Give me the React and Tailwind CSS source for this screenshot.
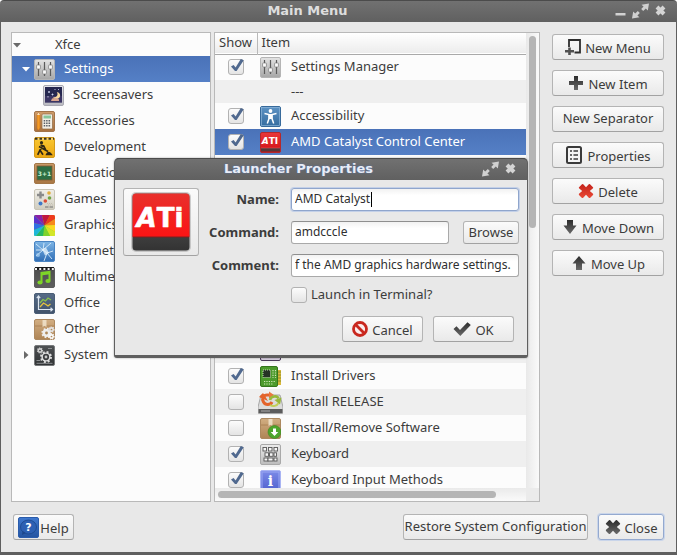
import React from "react";

const buttonLook =
  "rounded-[3px] border border-[#b4b4b4] border-b-[#a2a2a2] bg-linear-to-b from-[#fbfbfb] to-[#e9e9e9] text-[#3c3c3c]";

/* ---------- small glyphs ---------- */

function Svg({ size = "size-[21px]", box = "0 0 21 21", children }) {
  return (
    <svg viewBox={box} className={`block shrink-0 ${size}`} aria-hidden="true">
      {children}
    </svg>
  );
}

function Gradient({ id, from, to }) {
  return (
    <linearGradient id={id} x1="0" y1="0" x2="0" y2="1">
      <stop offset="0" stopColor={from} />
      <stop offset="1" stopColor={to} />
    </linearGradient>
  );
}

function Tile({ id, from, to, edge }) {
  return (
    <>
      <defs>
        <Gradient id={id} from={from} to={to} />
      </defs>
      <rect x="0.5" y="0.5" width="20" height="20" rx="1.5" fill={`url(#${id})`} stroke={edge} />
    </>
  );
}

function Gear({ cx, cy, r, fill, hole, ring = 0.36 }) {
  const tooth = (2 * Math.PI * r) / 16;
  return (
    <>
      <circle cx={cx} cy={cy} r={r} fill={fill} />
      <circle cx={cx} cy={cy} r={r} fill="none" stroke={fill} strokeWidth={r * 0.6} strokeDasharray={tooth} />
      <circle cx={cx} cy={cy} r={r * ring} fill={hole} />
    </>
  );
}

function SlidersIcon() {
  return (
    <Svg>
      <Tile id="sliders" from="#e4e4e4" to="#a6a6a6" edge="#b5b5b5" />
      <path d="M4.500 3v14M10.500 3v14M16.500 3v14" stroke="#5b5b5b" strokeWidth="1.200" />
      <g fill="#fafafa" stroke="#777" strokeWidth="0.700">
        <rect x="2.600" y="6" width="3.800" height="4" rx="0.600" />
        <rect x="8.600" y="11" width="3.800" height="4" rx="0.600" />
        <rect x="14.600" y="6" width="3.800" height="4" rx="0.600" />
      </g>
    </Svg>
  );
}

function ScreensaverIcon() {
  return (
    <Svg>
      <Tile id="saver" from="#e6e6ea" to="#b9b9c0" edge="#a9a9b2" />
      <rect x="2" y="2" width="17" height="15.500" fill="#25274f" />
      <path d="M2 11h17v6.500H2z" fill="#4b3f72" opacity=".6" />
      <path d="M13.800 7c2 3-.4 5.600-3.700 5.300 1.300 2.300 6 2.700 7-1 .5-1.900-1-4-3.300-4.300z" fill="#f8d9a0" />
      <path d="M9 13.500c2-1 5-.6 7 .9v1.600H8z" fill="#d9a58f" />
      <path d="M6 6v2M5 7h2M9.500 8.500v2M8.500 9.500h2M5 11v1.500M12 4v1M15 4.500h1" stroke="#d8ddf5" strokeWidth=".8" />
    </Svg>
  );
}

function AccessoriesIcon() {
  return (
    <Svg>
      <Tile id="acc" from="#cf9d6b" to="#a9713f" edge="#a2744a" />
      <path d="M3 4l1.500-2.500L6 4v13l-1 2H3.500L3 17z" fill="#f39a26" stroke="#b8641a" strokeWidth=".5" />
      <path d="M3 4l1.500-2.500L6 4z" fill="#fbe3c0" />
      <rect x="8" y="3" width="10.500" height="15" rx="1" fill="#f3efe6" stroke="#8e6a45" strokeWidth=".7" />
      <rect x="9.500" y="4.500" width="7.500" height="3" fill="#86c79b" />
      <path d="M9.700 9.700h7.300M9.700 12.200h7.300M9.700 14.700h7.300" stroke="#5c6068" strokeWidth="1.500" strokeDasharray="1.500 .9" />
    </Svg>
  );
}

function DevelopmentIcon() {
  return (
    <Svg>
      <Tile id="dev" from="#f9c832" to="#eda711" edge="#d29a1a" />
      <path d="M1 1h19v2H1z" fill="#f4d36b" />
      <path d="M1 1.800h19" stroke="#3a3120" strokeWidth="2" strokeDasharray="2.500 2" />
      <circle cx="7.500" cy="5.700" r="1.600" fill="#2e2716" />
      <path d="M6.500 8l3.200 1 1.800 3.600M8.500 9l-2.500 4.200 3 4.500M6 13l-2.300 4.800M5 9.500l9 5" stroke="#2e2716" strokeWidth="1.700" fill="none" />
      <path d="M11.500 18.300c1-3.300 3-4.300 4.700-3 1.200 1 2 2 2.500 3z" fill="#2e2716" />
    </Svg>
  );
}

function EducationIcon() {
  return (
    <Svg>
      <Tile id="edu" from="#c99a68" to="#a97744" edge="#a37748" />
      <rect x="3" y="3" width="15" height="14" fill="#2d6e43" stroke="#7e5a33" strokeWidth=".8" />
      <text x="10.500" y="12.500" textAnchor="middle" fontFamily="DejaVu Sans" fontWeight="bold" fontSize="6" fill="#c9efcf">
        3+1
      </text>
    </Svg>
  );
}

function GamesIcon() {
  return (
    <Svg>
      <Tile id="games" from="#f1efe8" to="#cfccbf" edge="#c8c4b6" />
      <path d="M6.500 2.500v7M3 6h7" stroke="#8a8a8a" strokeWidth="2.400" />
      <circle cx="15" cy="4" r="1.800" fill="#e2ad3d" />
      <circle cx="15.500" cy="9" r="1.800" fill="#70a544" />
      <circle cx="11.300" cy="12" r="1.800" fill="#dc4b35" />
      <circle cx="6.500" cy="14.500" r="2" fill="#3f78c8" />
      <path d="M11 18h3.500M15.500 18H19" stroke="#707070" strokeWidth="1.200" />
      <path d="M13 14.500h6M14 16h5" stroke="#b7b3a6" strokeWidth=".7" strokeDasharray="1 1" />
    </Svg>
  );
}

function GraphicsIcon() {
  return (
    <Svg>
      <defs>
        <clipPath id="wheelclip">
          <rect x="0" y="0" width="21" height="21" rx="1.500" />
        </clipPath>
      </defs>
      <g clipPath="url(#wheelclip)">
        <rect width="21" height="21" fill="#7ed32d" />
        <path d="M10.500 10.500L0 0h8z" fill="#8a1fa8" />
        <path d="M10.500 10.500L8 0h8z" fill="#c1173f" />
        <path d="M10.500 10.500L16 0h5v4z" fill="#ee3a1d" />
        <path d="M10.500 10.500L21 4v6z" fill="#f7891c" />
        <path d="M10.500 10.500L21 10v7z" fill="#fcd922" />
        <path d="M10.500 10.500L21 17v4h-5z" fill="#d3e629" />
        <path d="M10.500 10.500L16 21H9z" fill="#7ed32d" />
        <path d="M10.500 10.500L9 21H2z" fill="#25b865" />
        <path d="M10.500 10.500L2 21H0v-6z" fill="#1fb7d8" />
        <path d="M10.500 10.500L0 15V8z" fill="#2f6fe4" />
        <path d="M10.500 10.500L0 8V0z" fill="#5a32cf" />
      </g>
    </Svg>
  );
}

function InternetIcon() {
  return (
    <Svg>
      <Tile id="net" from="#7fb6e6" to="#2f6db5" edge="#4a84c2" />
      <path d="M2 3l7 6 8-7M9 9l-7 6M9 9l4 3 6-2M13 12l-3 8M13 12l5 6M2 9l7 0M9 9l1-7" stroke="#d9ecfb" strokeWidth="1" fill="none" opacity=".9" />
      <path d="M8 8l4-1.500L15 12l-4 2.500z" fill="#eaf5fd" opacity=".75" />
      <circle cx="4" cy="14" r="2" fill="#a9d1f2" opacity=".7" />
    </Svg>
  );
}

function MultimediaIcon() {
  return (
    <Svg>
      <Tile id="media" from="#4c4c4c" to="#5e5e5e" edge="#5b5b5b" />
      <path d="M1 0h19v3H1z" fill="#1a1a1a" />
      <path d="M1 2h19" stroke="#f3f3f3" strokeWidth="2" strokeDasharray="2 2.200" />
      <path d="M7.500 15V6l8-1v8.500" stroke="#7ed528" strokeWidth="2" fill="none" />
      <path d="M7 7.500l8.500-1.200" stroke="#7ed528" strokeWidth="2" />
      <ellipse cx="6" cy="15.500" rx="2.600" ry="2.100" fill="#7ed528" />
      <ellipse cx="14" cy="14" rx="2.600" ry="2.100" fill="#7ed528" />
    </Svg>
  );
}

function OfficeIcon() {
  return (
    <Svg>
      <Tile id="office" from="#566b86" to="#41536b" edge="#4a5d76" />
      <path d="M4.500 3.500v13H18M2.800 5.200L4.500 3l1.700 2.200M16.500 14.700l2 1.800-2 1.700" stroke="#dde6f0" strokeWidth="1.200" fill="none" />
      <path d="M6 10l3-3.500 2.500 1.500 2.500-3 3 2" stroke="#8ac24a" strokeWidth="1.300" fill="none" />
      <path d="M6 14l3.500-4 2.500 1.500 2 1.500 2.500-2" stroke="#e5c33c" strokeWidth="1.300" fill="none" />
    </Svg>
  );
}

function Carton({ id }) {
  return (
    <>
      <Tile id={id} from="#d2ae82" to="#ae8455" edge="#ad8960" />
      <path d="M1 7h19" stroke="#a67b4e" strokeWidth=".8" />
      <path d="M8.500 1h4v7l-2-1-2 1z" fill="#f1e4cd" opacity=".85" />
    </>
  );
}

function OtherIcon() {
  return (
    <Svg>
      <Carton id="other" />
      <Gear cx={12.5} cy={14} r={4} fill="#efefef" hole="#b08a5c" />
      <Gear cx={17.5} cy={10.5} r={2.4} fill="#e4e4e4" hole="#b08a5c" />
      <Gear cx={17.5} cy={17.5} r={2.4} fill="#fafafa" hole="#b08a5c" />
    </Svg>
  );
}

function SystemIcon() {
  return (
    <Svg>
      <Tile id="system" from="#4f5254" to="#303234" edge="#77797b" />
      <path d="M2.500 15.500h4M14 3.500h4M2.500 18.300h16" stroke="#8d8f91" strokeWidth="1" />
      <Gear cx={6} cy={5.5} r={2.4} fill="#cfcfcf" hole="#3b3d3f" />
      <Gear cx={12} cy={12} r={4.6} fill="#dedede" hole="#3b3d3f" ring={0.68} />
      <circle cx="12" cy="12" r="1.400" fill="#c9c9c9" />
    </Svg>
  );
}

function AccessibilityIcon() {
  return (
    <Svg>
      <Tile id="a11y" from="#5d93c4" to="#356c9f" edge="#376a9b" />
      <rect x="1.500" y="1.500" width="18" height="18" fill="none" stroke="#8db5d9" strokeWidth=".7" />
      <circle cx="10.500" cy="5" r="1.900" fill="#fff" />
      <path d="M4.500 7.600l4.500 1v4l-1.700 5M16.500 7.600l-4.500 1v4l1.700 5" stroke="#fff" strokeWidth="1.500" fill="none" />
      <path d="M8.500 8h4v5h-4z" fill="#fff" />
    </Svg>
  );
}

function AtiIcon() {
  return (
    <Svg>
      <Tile id="atis" from="#e8383a" to="#d20f14" edge="#b5282b" />
      <path d="M1 16h19v3.500H1z" fill="#55383a" />
      <path d="M1 16h19" stroke="#e46a6a" strokeWidth=".5" />
      <text x="10" y="12.200" textAnchor="middle" fontFamily="DejaVu Sans" fontWeight="bold" fontSize="9" fill="#fff">
        <tspan fontStyle="italic">A</tspan>TI
      </text>
    </Svg>
  );
}

function AtiLogo() {
  return (
    <Svg size="size-[60px]" box="0 0 60 60">
      <defs>
        <Gradient id="atired" from="#e8302c" to="#fb1414" />
        <Gradient id="atidark" from="#5f5f5f" to="#333333" />
      </defs>
      <rect x="0" y="0" width="60" height="60" rx="5" fill="#9a9a9a" opacity=".45" />
      <rect x="1.500" y="1.500" width="57" height="57" rx="3.500" fill="url(#atidark)" />
      <path d="M5 1.500h50a3.500 3.500 0 0 1 3.500 3.500v40h-57V5A3.500 3.500 0 0 1 5 1.500z" fill="url(#atired)" />
      <path d="M2 45h56" stroke="#7a2020" strokeWidth="1" />
      <text
        x="29"
        y="34.500"
        textAnchor="middle"
        fill="#fff"
        stroke="#fff"
        strokeWidth=".6"
        strokeLinejoin="round"
        fontFamily="DejaVu Sans"
        fontWeight="bold"
        fontSize="26"
      >
        <tspan fontStyle="italic">A</tspan>Ti
      </text>
    </Svg>
  );
}

function DriversIcon() {
  return (
    <Svg>
      <rect x="15" y="4" width="6" height="15" fill="#d9b83a" />
      <path d="M15 6h6M15 9h6M15 12h6M15 15h6" stroke="#7f8a2a" strokeWidth=".9" />
      <rect x=".5" y=".5" width="17" height="20" rx="1.500" fill="#4c9a2c" stroke="#35761d" />
      <rect x="3" y="4" width="7.500" height="7.500" fill="#263326" stroke="#c5dcb4" strokeWidth="1" strokeDasharray="1 1" />
      <path d="M4 15.500h12M4 18h9M13 4v8M15.500 4v8" stroke="#cfe8b8" strokeWidth="1.200" strokeDasharray="1.200 1.200" />
    </Svg>
  );
}

function ReleaseIcon() {
  return (
    <Svg size="h-[23px] w-[25px]" box="0 0 25 23">
      <path d="M3 4h19l3 12v5.500a1 1 0 0 1-1 1H1a1 1 0 0 1-1-1V16z" fill="#dcdcdc" stroke="#8b8b8b" strokeWidth=".7" />
      <path d="M.5 18h24v4H.5z" fill="#5c5c5c" />
      <path d="M3 20h9" stroke="#a9a9a9" strokeWidth="1" />
      <path d="M14 11c-1.500 3-6.500 3.500-8.500 0S5.500 4 9 4h3" stroke="#e4632b" strokeWidth="3" fill="none" />
      <path d="M1 6l4-4 2 3 3 5z" fill="#e4632b" />
      <path d="M11 .5l5 3.500-5 3.500z" fill="#e9773f" />
      <path d="M12 9c1-4 7-5 8.500-1.500" stroke="#98b83a" strokeWidth="2.600" fill="none" />
      <path d="M16.500 9l7-2.500-1.500 7z" fill="#98b83a" />
      <path d="M12 14c3 2 7 1 8.500-2" stroke="#c2cf5a" strokeWidth="2" fill="none" />
    </Svg>
  );
}

function SoftwareIcon() {
  return (
    <Svg>
      <Carton id="software" />
      <circle cx="14.500" cy="14" r="6.500" fill="#4ea52c" stroke="#3b861e" strokeWidth=".6" />
      <path d="M13 10.500h3V14h2.300l-3.800 4-3.800-4H13z" fill="#fff" />
    </Svg>
  );
}

function KeyboardIcon() {
  return (
    <Svg>
      <Tile id="keyb" from="#ececec" to="#bcbcbc" edge="#a9a9a9" />
      <g fill="#f7f7f7" stroke="#555" strokeWidth=".9">
        <rect x="3" y="3.500" width="3.500" height="3.500" />
        <rect x="8.500" y="3.500" width="3.500" height="3.500" />
        <rect x="14" y="3.500" width="3.500" height="3.500" />
        <rect x="5" y="8.800" width="3.500" height="3.500" />
        <rect x="9.500" y="8.800" width="3.500" height="3.500" />
        <rect x="14" y="8.800" width="2.500" height="3.500" />
        <rect x="4" y="14" width="4" height="3" />
        <rect x="8" y="14" width="5" height="3" />
        <rect x="14" y="14" width="3" height="3" />
      </g>
    </Svg>
  );
}

function InputMethodIcon() {
  return (
    <Svg>
      <Tile id="ibus" from="#7c8be8" to="#5263cf" edge="#a9b4f3" />
      <rect x="2" y="2" width="17" height="17" fill="none" stroke="#9aa7f2" strokeWidth="1" />
      <text x="10.500" y="16" textAnchor="middle" fontFamily="DejaVu Serif" fontWeight="bold" fontSize="14" fill="#fff">
        i
      </text>
    </Svg>
  );
}

function PurpleIcon() {
  return (
    <Svg>
      <Tile id="purple" from="#8b7b9b" to="#d8cfe0" edge="#4d3b5c" />
    </Svg>
  );
}

function HelpIcon() {
  return (
    <Svg>
      <Tile id="help" from="#3f78cf" to="#2454a0" edge="#2a5cac" />
      <ellipse cx="10.500" cy="10" rx="8" ry="7" fill="#2d60b3" stroke="#1c478c" strokeWidth=".8" />
      <path d="M4.500 14L4 18l4-2z" fill="#1c478c" />
      <text x="10.500" y="14" textAnchor="middle" fontFamily="DejaVu Sans" fontWeight="bold" fontSize="11" fill="#fff">
        ?
      </text>
    </Svg>
  );
}

function DarkDefs({ id }) {
  return (
    <defs>
      <Gradient id={id} from="#2c2c2c" to="#6a6a6a" />
    </defs>
  );
}

function NewMenuGlyph() {
  return (
    <Svg size="size-4" box="0 0 16 16">
      <path d="M4 8V1h11v12.500H9.500" fill="none" stroke="#2e2e2e" strokeWidth="1.800" />
      <path d="M3.200 8.500h2.600V11H9v2.600H5.800V16H3.200v-2.400H0V11h3.200z" fill="#505050" />
    </Svg>
  );
}

function PlusGlyph() {
  return (
    <Svg size="size-4" box="0 0 16 16">
      <DarkDefs id="plus" />
      <path d="M6 1h4v5h5v4h-5v5H6v-5H1V6h5z" fill="url(#plus)" />
    </Svg>
  );
}

function PropertiesGlyph() {
  return (
    <Svg size="size-[18px]" box="0 0 18 18">
      <rect x="2" y="1" width="14" height="16" rx="1.500" fill="#f4f4f4" stroke="#3a3a3a" strokeWidth="2" />
      <path d="M5 5h2M5 9h2M5 13h2M8.500 5H13M8.500 9H13M8.500 13H13" stroke="#3a3a3a" strokeWidth="1.700" />
    </Svg>
  );
}

function CrossGlyph({ id, from, to }) {
  return (
    <Svg size="size-4" box="0 0 16 16">
      <defs>
        <Gradient id={id} from={from} to={to} />
      </defs>
      <path
        d="M1 4.200L4 1.200q.6-.4 1.200.1L8 4.300l2.800-3q.6-.5 1.200-.1l3 3q.4.600 0 1L11.800 8l3.200 2.800q.5.500 0 1.100l-3 3q-.6.300-1.200-.1L8 11.700l-2.800 3.100q-.6.500-1.200.1l-3-3q-.4-.6 0-1.100L4.200 8 1 5.200q-.4-.4 0-1z"
        fill={`url(#${id})`}
      />
    </Svg>
  );
}

function ArrowGlyph({ id, up }) {
  return (
    <Svg size="size-4" box="0 0 16 16">
      <DarkDefs id={id} />
      <path d={up ? "M8 1l6.500 7.500H11V15H5V8.500H1.500z" : "M5 1h6v5.500h3.500L8 15 1.500 6.500H5z"} fill={`url(#${id})`} />
    </Svg>
  );
}

function ForbidGlyph() {
  return (
    <Svg size="size-4" box="0 0 16 16">
      <circle cx="8" cy="8" r="6.500" fill="#fbeeee" stroke="#c9281f" strokeWidth="2.800" />
      <path d="M3.500 3.500l9 9" stroke="#c9281f" strokeWidth="2.800" />
    </Svg>
  );
}

function TickGlyph() {
  return (
    <Svg size="h-4 w-[18px]" box="0 0 18 16">
      <DarkDefs id="tick" />
      <path d="M.5 8l3-2.800L7 9 14.500 1.200 17.800 4 7.300 15z" fill="url(#tick)" />
    </Svg>
  );
}

/* ---------- window chrome ---------- */

function MinimizeGlyph() {
  return (
    <Svg size="h-4 w-[11px]" box="0 0 11 16">
      <path d="M.5 10h10v2.500H.5z" fill="#d2d2d2" />
    </Svg>
  );
}

function MaximizeGlyph() {
  return (
    <Svg size="h-4 w-[17px]" box="0 0 17 16">
      <path
        d="M17 .5l-1.200 7-2-1.900-2.600 2.500-2-2.100 2.400-2.500L9.500 1.700zM0 15.500l1.200-7 2 1.900L5.800 7.900l2 2.100-2.400 2.500 2.100 1.800z"
        fill="#d0d0d0"
      />
    </Svg>
  );
}

function CloseGlyph() {
  return (
    <Svg size="h-4 w-[11px]" box="0 0 11 16">
      <path d="M2 4l7 7M9 4l-7 7" stroke="#d4d4d4" strokeWidth="4" />
    </Svg>
  );
}

function TitleBar({ title, minimize, focused }) {
  return (
    <header className="flex h-[22px] shrink-0 items-center rounded-t-[4px] border-t border-[#4b4b4b] bg-linear-to-b from-[#717171] to-[#606060] pr-[11px] pb-px font-['DejaVu_Sans'] text-[13px] leading-4 font-bold">
      <h2 className={`flex-1 text-center ${focused ? "text-[#e8ecf6] [text-shadow:0_0_2px_#5577b5]" : "text-[#dedede]"}`}>
        {title}
      </h2>
      <div className="flex items-center gap-1.5">
        {minimize && (
          <button type="button" aria-label="Minimize">
            <MinimizeGlyph />
          </button>
        )}
        <button type="button" aria-label="Maximize">
          <MaximizeGlyph />
        </button>
        <button type="button" aria-label="Close window">
          <CloseGlyph />
        </button>
      </div>
    </header>
  );
}

/* ---------- controls ---------- */

function ActionButton({ icon, children, className = "" }) {
  return (
    <button type="button" className={`flex h-[26px] items-center justify-center gap-1 whitespace-nowrap ${buttonLook} ${className}`}>
      {icon}
      <span className={icon ? "pt-0.5" : "pb-0.5"}>{children}</span>
    </button>
  );
}

function CheckBox({ id, checked, label }) {
  return (
    <span className="relative block size-4 shrink-0">
      <input
        id={id}
        type="checkbox"
        defaultChecked={checked}
        aria-label={label}
        className="peer block size-4 appearance-none rounded-[3px] border border-[#b2b2b2] bg-linear-to-b from-[#fcfcfc] to-[#e4e4e4]"
      />
      <svg viewBox="0 0 16 16" className="pointer-events-none absolute inset-0 hidden size-4 overflow-visible peer-checked:block" aria-hidden="true">
        <path d="M3 7.600L5.600 6l2 2.400L12.800 0l3 1.200L8.600 12H7z" fill="#50698f" />
      </svg>
    </span>
  );
}

function Expander({ open, light }) {
  return (
    <svg viewBox="0 0 8 8" className={`size-2 shrink-0 ${light ? "text-white" : "text-[#6a6a6a]"}`} aria-hidden="true">
      <path d={open ? "M0 2h8L4 6.500z" : "M2 0v8l4.500-4z"} fill="currentColor" />
    </svg>
  );
}

/* ---------- data ---------- */

const categories = [
  { name: "Accessories", Icon: AccessoriesIcon },
  { name: "Development", Icon: DevelopmentIcon },
  { name: "Education", Icon: EducationIcon },
  { name: "Games", Icon: GamesIcon },
  { name: "Graphics", Icon: GraphicsIcon },
  { name: "Internet", Icon: InternetIcon },
  { name: "Multimedia", Icon: MultimediaIcon },
  { name: "Office", Icon: OfficeIcon },
  { name: "Other", Icon: OtherIcon },
  { name: "System", Icon: SystemIcon, expandable: true },
];

const items = [
  { name: "Settings Manager", Icon: SlidersIcon, shown: true },
  { name: "---", separator: true },
  { name: "Accessibility", Icon: AccessibilityIcon, shown: true },
  { name: "AMD Catalyst Control Center", Icon: AtiIcon, shown: true, selected: true },
  {},
  {},
  {},
  {},
  {},
  {},
  {},
  { Icon: PurpleIcon },
  { name: "Install Drivers", Icon: DriversIcon, shown: true },
  { name: "Install RELEASE", Icon: ReleaseIcon, shown: false },
  { name: "Install/Remove Software", Icon: SoftwareIcon, shown: false },
  { name: "Keyboard", Icon: KeyboardIcon, shown: true },
  { name: "Keyboard Input Methods", Icon: InputMethodIcon, shown: true },
];

const selectedRow = "bg-linear-to-b from-[#4a72b8] to-[#5580c6] text-white";

function CategoryTree() {
  return (
    <nav aria-label="Menus" className="w-[200px] shrink-0 overflow-hidden border border-[#b9b9b9] bg-[#fcfcfc]">
      <ul>
        <li className="flex h-[23px] items-center gap-[34px] pl-px">
          <Expander open />
          <span className="pb-0.5">Xfce</span>
        </li>
        <li className={`flex h-[26px] items-center pl-2.5 ${selectedRow}`}>
          <Expander open light />
          <span className="flex items-center gap-[9px] pl-1">
            <SlidersIcon />
            <span className="pb-0.5">Settings</span>
          </span>
        </li>
        <li className="flex h-[26px] items-center gap-[9px] pl-[31px]">
          <ScreensaverIcon />
          <span className="pb-0.5">Screensavers</span>
        </li>
        {categories.map(({ name, Icon, expandable }) => (
          <li key={name} className="flex h-[26px] items-center pl-2.5">
            <span className="w-2">{expandable && <Expander />}</span>
            <span className="flex items-center gap-[9px] pl-1">
              <Icon />
              <span className="pb-0.5">{name}</span>
            </span>
          </li>
        ))}
      </ul>
    </nav>
  );
}

function ItemRow({ item, index }) {
  const { name, Icon, shown, separator, selected } = item;
  const stripe = index % 2 ? "bg-[#efefef]" : "bg-[#fcfcfc]";
  return (
    <tr className={`${separator ? "h-[23px]" : "h-[26px]"} ${selected ? selectedRow : stripe}`}>
      <td className="p-0 pl-[13px]">{shown !== undefined && <CheckBox checked={shown} label={`Show ${name}`} />}</td>
      <td className="p-0">
        <div className="flex items-center">
          <span className="flex w-[27px] shrink-0 justify-center">{Icon && <Icon />}</span>
          <span className="pb-0.5 pl-[7px] whitespace-nowrap">{name}</span>
        </div>
      </td>
    </tr>
  );
}

function ItemList() {
  return (
    <section aria-label="Items" className="flex min-w-0 flex-1 flex-col border border-[#b9b9b9] bg-[#fcfcfc]">
      <div className="flex min-h-0 flex-1">
        <div className="min-w-0 flex-1 overflow-hidden">
          <table className="w-full table-fixed border-collapse">
            <thead>
              <tr className="h-[21px] border-b border-[#a9a9a9] bg-linear-to-b from-white to-[#ececec] text-left">
                <th className="w-[42px] border-r border-[#b9b9b9] p-0 pb-0.5 pl-1 font-normal">Show</th>
                <th className="p-0 pb-0.5 pl-1 font-normal">Item</th>
              </tr>
            </thead>
            <tbody>
              {items.map((item, index) => (
                <ItemRow key={index} item={item} index={index} />
              ))}
            </tbody>
          </table>
        </div>
        <div className="w-[13px] shrink-0 bg-linear-to-r from-[#e9e9e9] to-[#fafafa] px-[3px] pt-[3px]">
          <div className="h-[192px] rounded-full bg-[#b5b5b5]" />
        </div>
      </div>
      <div className="flex h-[13px] shrink-0 bg-[#ebebeb]">
        <div className="flex-1 bg-linear-to-b from-[#eaeaea] to-[#fafafa] px-[3px] pt-[3px]">
          <div className="h-[7px] w-[91%] rounded-full bg-[#b5b5b5]" />
        </div>
        <div className="w-[13px]" />
      </div>
    </section>
  );
}

const fieldBase =
  "block h-[23px] w-full min-w-0 rounded-[3px] border bg-linear-to-b from-[#f2f2f2] to-white to-30% px-[3px] pb-0.5 text-xs text-[#2f2f2f] outline-none";
const fieldLook = `${fieldBase} border-[#a9a9a9] border-t-[#8f8f8f]`;
const focusedField = `${fieldBase} border-[#8fa5cc] shadow-[0_0_0_1px_#c3d0e8]`;

function FieldLabel({ htmlFor, children }) {
  return (
    <label htmlFor={htmlFor} className="pb-0.5 text-right font-bold">
      {children}
    </label>
  );
}

function LauncherDialog() {
  return (
    <section
      role="dialog"
      aria-label="Launcher Properties"
      className="absolute top-[158px] left-[114px] w-[414px] rounded-t-[5px] rounded-b-[3px] bg-[#5f5f5f] px-px pb-[3px] shadow-[0_0_2px_#0006]"
    >
      <TitleBar title="Launcher Properties" focused />
      <form className="bg-[#e8e8e8] px-2 pt-2 pb-[13px]" onSubmit={(e) => e.preventDefault()}>
        <div className="flex items-start">
          <button type="button" aria-label="Choose icon" className={`flex h-[68px] w-[76px] shrink-0 items-center justify-center ${buttonLook}`}>
            <AtiLogo />
          </button>
          <div className="grid min-w-0 flex-1 grid-cols-[80px_1fr] items-center gap-x-3 gap-y-2.5">
            <FieldLabel htmlFor="name">Name:</FieldLabel>
            <div className="relative">
              <input id="name" defaultValue="AMD Catalyst" className={focusedField} />
              <span className="absolute top-1 left-20 h-[15px] w-px bg-black" />
            </div>
            <FieldLabel htmlFor="command">Command:</FieldLabel>
            <div className="flex gap-3.5">
              <input id="command" defaultValue="amdcccle" className={fieldLook} />
              <button type="button" className={`h-[23px] w-14 shrink-0 pb-0.5 ${buttonLook}`}>
                Browse
              </button>
            </div>
            <FieldLabel htmlFor="comment">Comment:</FieldLabel>
            <input id="comment" defaultValue="f the AMD graphics hardware settings." className={fieldLook} />
            <div className="col-start-2 flex items-center gap-1">
              <CheckBox id="terminal" checked={false} />
              <label htmlFor="terminal" className="pb-0.5 leading-[14px]">
                Launch in Terminal?
              </label>
            </div>
          </div>
        </div>
        <div className="flex justify-end gap-2.5 pt-[13px] pr-[5px]">
          <ActionButton icon={<ForbidGlyph />} className="w-[81px]">
            Cancel
          </ActionButton>
          <ActionButton icon={<TickGlyph />} className="w-[81px]">
            OK
          </ActionButton>
        </div>
      </form>
    </section>
  );
}

export default function App() {
  return (
    <div className="relative flex h-screen flex-col overflow-hidden bg-white font-['Noto_Sans',sans-serif] text-[13px] leading-[18px] text-[#3c3c3c]">
      <TitleBar title="Main Menu" minimize />
      <main className="flex min-h-0 flex-1 flex-col border-x border-b-3 border-[#5f5f5f] bg-[#e8e8e8] px-2.5 pt-2.5 pb-3">
        <div className="flex min-h-0 flex-1">
          <CategoryTree />
          <div className="w-[3px] shrink-0" />
          <ItemList />
          <div className="mr-0.5 ml-3 flex w-[112px] shrink-0 flex-col gap-2.5 pt-0.5">
            <ActionButton icon={<NewMenuGlyph />}>New Menu</ActionButton>
            <ActionButton icon={<PlusGlyph />}>New Item</ActionButton>
            <ActionButton>New Separator</ActionButton>
            <ActionButton icon={<PropertiesGlyph />}>Properties</ActionButton>
            <ActionButton icon={<CrossGlyph id="redx" from="#c3221a" to="#ea4a36" />}>Delete</ActionButton>
            <ActionButton icon={<ArrowGlyph id="down" />}>Move Down</ActionButton>
            <ActionButton icon={<ArrowGlyph id="up" up />}>Move Up</ActionButton>
          </div>
        </div>
        <footer className="flex items-center gap-2.5 px-0.5 pt-3">
          <button type="button" className={`mr-auto flex h-[26px] w-[61px] items-center justify-center gap-px ${buttonLook}`}>
            <HelpIcon />
            <span className="pt-0.5">Help</span>
          </button>
          <ActionButton className="w-[185px]">Restore System Configuration</ActionButton>
          <button
            type="button"
            className="flex h-[26px] w-[66px] items-center justify-center gap-1 rounded-[3px] border border-[#94a9cf] bg-linear-to-b from-[#fbfbfb] to-[#e9e9e9] shadow-[0_0_0_1px_#c9d5ea]"
          >
            <CrossGlyph id="darkx" from="#2c2c2c" to="#6a6a6a" />
            <span className="pt-0.5">Close</span>
          </button>
        </footer>
      </main>
      <LauncherDialog />
    </div>
  );
}
